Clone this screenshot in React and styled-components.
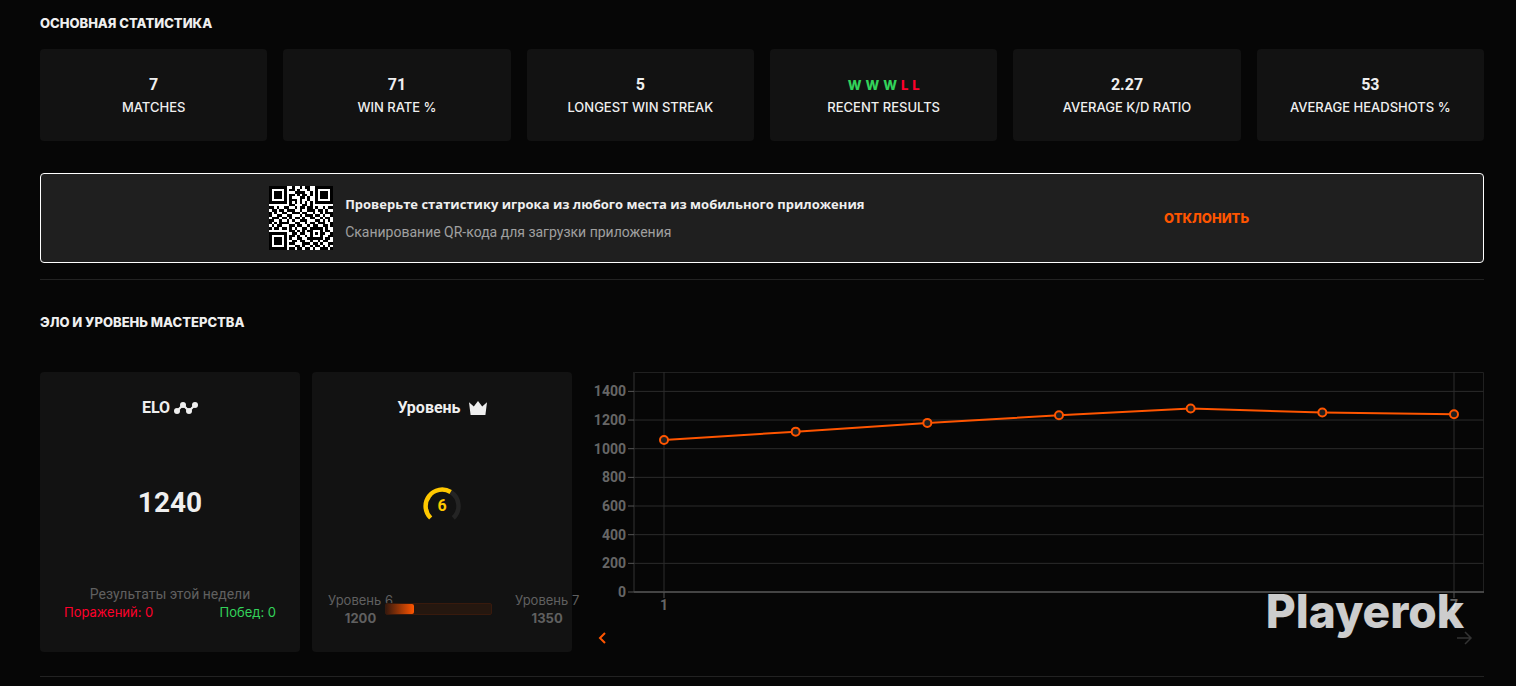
import React, { useState, useRef, useLayoutEffect } from 'react';
import styled, { createGlobalStyle } from 'styled-components';

const GlobalStyle = createGlobalStyle`
  * {
    box-sizing: border-box;
  }

  body {
    margin: 0;
    background: #060606;
    color: #efefef;
    font-family: Inter, Roboto, sans-serif;
    font-size: 13px;
    line-height: 20px;
  }
`;

const Page = styled.main`
  padding: 13px 32px 8px 40px;
`;

const SectionTitle = styled.h2`
  margin: 0 0 ${({ $gap }) => $gap}px;
  font-size: 13px;
  line-height: 20px;
  font-weight: 800;
  text-transform: uppercase;
`;

const Divider = styled.hr`
  height: 1px;
  margin: ${({ $top }) => $top}px 0 32px;
  border: none;
  background: #222;
`;

const StatGrid = styled.section`
  display: grid;
  grid-template-columns: repeat(6, 1fr);
  gap: 16px;
  margin-bottom: 32px;
`;

const StatCard = styled.div`
  padding: 25px 8px 23px;
  border-radius: 4px;
  background: #121212;
  text-align: center;
  line-height: 22px;
`;

const StatValue = styled.div`
  font-family: Roboto, sans-serif;
  font-size: 16px;
  font-weight: 700;
`;

const StatLabel = styled.div`
  font-weight: 500;
  text-transform: uppercase;
`;

const Results = styled.div`
  display: flex;
  justify-content: center;
  gap: 4px;
  font-weight: 800;
`;

const Result = styled.span`
  color: ${({ $win }) => ($win ? '#32d35a' : '#ff002b')};
`;

const Banner = styled.section`
  display: flex;
  justify-content: space-between;
  align-items: center;
  padding: 12px 16.2% 12px 15.8%;
  border: 1px solid #fff;
  border-radius: 4px;
  background: #1f1f1f;
`;

const BannerInfo = styled.div`
  display: flex;
  align-items: center;
  gap: 12px;
`;

const BannerTitle = styled.div`
  margin-bottom: 8px;
  font-family: 'Open Sans', sans-serif;
  font-weight: 700;
`;

const BannerText = styled.div`
  color: #a0a0a0;
  font-family: Roboto, sans-serif;
  font-size: 14px;
`;

const DismissButton = styled.button`
  padding: 0;
  border: none;
  background: none;
  color: #ff5500;
  font: inherit;
  font-weight: 800;
  text-transform: uppercase;
  cursor: pointer;
`;

const EloRow = styled.section`
  position: relative;
  display: flex;
  gap: 12px;
`;

const Panel = styled.div`
  display: flex;
  flex: 0 0 260px;
  flex-direction: column;
  justify-content: space-between;
  height: 280px;
  padding: 24px ${({ $side }) => $side}px 25px;
  border-radius: 4px;
  background: #121212;
`;

const PanelTitle = styled.h3`
  display: flex;
  justify-content: center;
  align-items: center;
  gap: ${({ $gap }) => $gap}px;
  margin: 0;
  font-family: Roboto, sans-serif;
  font-size: 16px;
  line-height: 24px;
  font-weight: 700;
`;

const EloValue = styled.div`
  font-family: Roboto, sans-serif;
  font-size: 28px;
  line-height: 36px;
  font-weight: 700;
  text-align: center;
`;

const WeekLabel = styled.div`
  color: #606060;
  font-family: Roboto, sans-serif;
  font-size: 14px;
  line-height: 18px;
  text-align: center;
`;

const WeekRow = styled.div`
  display: flex;
  justify-content: space-between;
  padding-bottom: 6px;
  line-height: 18px;
`;

const LevelGauge = styled.svg`
  align-self: center;
  font-family: Roboto, sans-serif;
  font-size: 16px;
  font-weight: 700;
`;

const LevelRow = styled.div`
  display: grid;
  grid-template-columns: minmax(0, 1fr) minmax(0, 2fr) minmax(0, 1fr);
  align-items: center;
`;

const LevelLabel = styled.div`
  width: max-content;
  padding-left: ${({ $end }) => ($end ? 16 : 0)}px;
  color: #606060;
  line-height: 18px;
  text-align: center;
  white-space: nowrap;
`;

const LevelTrack = styled.div`
  height: 12px;
  margin-right: 7px;
  border: 1px solid #381a0d;
  border-radius: 2px;
  background: #25170f;
`;

const LevelFill = styled.div`
  height: 10px;
  border-radius: 0 2px 2px 0;
  background: linear-gradient(90deg, #38190d, #ff5500);
`;

const ChartColumn = styled.div`
  flex: 1;
  min-width: 0;
`;

const ChartSvg = styled.svg`
  display: block;
  width: 100%;
  height: 254px;
  font-family: Roboto, sans-serif;
  font-size: 14px;
  font-weight: 700;
  fill: #666;
`;

const ChartNav = styled.div`
  display: flex;
  justify-content: space-between;
  padding: 0 10px;
`;

const NavButton = styled.button`
  display: flex;
  padding: 2px 0;
  border: none;
  background: none;
  color: ${({ disabled }) => (disabled ? '#333' : '#ff5500')};
  cursor: pointer;
`;

const Watermark = styled.div`
  position: absolute;
  right: 20px;
  bottom: 13px;
  color: #fff;
  opacity: 0.8;
  font-size: 46px;
  line-height: 56px;
  font-weight: 800;
  pointer-events: none;
`;

const stats = [
  { label: 'Matches', value: '7' },
  { label: 'Win Rate %', value: '71' },
  { label: 'Longest Win Streak', value: '5' },
  { label: 'Recent Results', results: ['W', 'W', 'W', 'L', 'L'] },
  { label: 'Average K/D Ratio', value: '2.27' },
  { label: 'Average Headshots %', value: '53' },
];

const eloHistory = [1061, 1119, 1180, 1233, 1280, 1252, 1240];
const eloTicks = [0, 200, 400, 600, 800, 1000, 1200, 1400];

const qrRows = [
  '1111111001001011001111111',
  '1000001011010001001000001',
  '1011101000111100101011101',
  '1011101011010110101011101',
  '1011101010001101001011101',
  '1000001011101001001000001',
  '1111111010101010101111111',
  '0000000011000110100000000',
  '1101001100101101101001011',
  '0110110111001001110110100',
  '1010011001110110010010111',
  '1001100110001011101101001',
  '0111011010110100110010110',
  '1100100101001110001101010',
  '1010111100110010110111001',
  '0101100011011001011001101',
  '1011011010100110111110100',
  '0000000011010101100010110',
  '1111111001101100101011001',
  '1000001011010010100010011',
  '1011101010011001111110110',
  '1011101001101100100101100',
  '1011101011000111011010011',
  '1000001000110100101101010',
  '1111111011011011010011101',
];

const QrCode = () => (
  <svg width="64" height="64" viewBox="0 0 25 25" shapeRendering="crispEdges" role="img" aria-label="QR">
    <rect width="25" height="25" fill="#fff" />
    {qrRows.map((row, y) =>
      row.split('').map((cell, x) => cell === '1' && <rect key={`${x}-${y}`} x={x} y={y} width="1" height="1" fill="#000" />)
    )}
  </svg>
);

const EloIcon = () => (
  <svg width="24" height="14" viewBox="0 0 24 14" fill="#efefef">
    <path d="M3 10 9 4l6 6 6-6" fill="none" stroke="#efefef" strokeWidth="2" />
    <circle cx="3" cy="10" r="3" />
    <circle cx="9" cy="4" r="3" />
    <circle cx="15" cy="10" r="3" />
    <circle cx="21" cy="4" r="3" />
  </svg>
);

const CrownIcon = () => (
  <svg width="18" height="14" viewBox="0 0 18 14" fill="#efefef">
    <path d="M0 1.2 4.8 5.6 9 0l4.2 5.6L18 1.2 16.4 14H1.6Z" />
  </svg>
);

const EloChart = () => {
  const ref = useRef(null);
  const [width, setWidth] = useState(900);

  useLayoutEffect(() => {
    const observer = new ResizeObserver(([entry]) => setWidth(entry.contentRect.width));
    observer.observe(ref.current);
    return () => observer.disconnect();
  }, []);

  const left = 50;
  const right = width - 0.5;
  const bottom = 220;
  const toX = (index) => left + 30 + (index * (width - left - 60)) / (eloHistory.length - 1);
  const toY = (elo) => bottom - elo * 0.1433;
  const points = eloHistory.map((elo, index) => [toX(index), toY(elo)]);

  return (
    <ChartSvg ref={ref}>
      <g stroke="#2c2c2c">
        <path d={`M${left} .5H${right}V${bottom}`} fill="none" stroke="#202020" />
        <path d={`M${left} 0V${bottom}`} stroke="#1c1c1c" strokeWidth="2" />
        {eloTicks.slice(1).map((tick) => (
          <line key={tick} x1={left} x2={right} y1={toY(tick)} y2={toY(tick)} />
        ))}
        <line x1={toX(0)} x2={toX(0)} y1="0" y2={bottom} />
        <line x1={toX(6)} x2={toX(6)} y1="0" y2={bottom} />
      </g>
      <g stroke="#555">
        <line x1={left} x2={width} y1={bottom} y2={bottom} strokeWidth="2" stroke="#444" />
        {eloTicks.map((tick) => (
          <line key={tick} x1={left - 6} x2={left} y1={toY(tick)} y2={toY(tick)} />
        ))}
        <line x1={toX(0)} x2={toX(0)} y1={bottom} y2={bottom + 6} />
        <line x1={toX(6)} x2={toX(6)} y1={bottom} y2={bottom + 6} />
      </g>
      {eloTicks.map((tick) => (
        <text key={tick} x={left - 8} y={toY(tick) + 5} textAnchor="end">
          {tick}
        </text>
      ))}
      <text x={toX(0)} y="238" textAnchor="middle">1</text>
      <text x={toX(6)} y="238" textAnchor="middle">7</text>
      <polyline points={points.join(' ')} fill="none" stroke="#ff5500" strokeWidth="2" />
      {points.map(([x, y]) => (
        <circle key={x} cx={x} cy={y} r="4" fill="#1f1f1f" stroke="#ff5500" strokeWidth="2" />
      ))}
    </ChartSvg>
  );
};

const App = () => {
  const [showBanner, setShowBanner] = useState(true);

  return (
    <Page>
      <GlobalStyle />
      <SectionTitle $gap={16}>Основная статистика</SectionTitle>
      <StatGrid>
        {stats.map(({ label, value, results }) => (
          <StatCard key={label}>
            {results ? (
              <Results>
                {results.map((result, index) => (
                  <Result key={index} $win={result === 'W'}>{result}</Result>
                ))}
              </Results>
            ) : (
              <StatValue>{value}</StatValue>
            )}
            <StatLabel>{label}</StatLabel>
          </StatCard>
        ))}
      </StatGrid>

      {showBanner && (
        <Banner>
          <BannerInfo>
            <QrCode />
            <div>
              <BannerTitle>Проверьте статистику игрока из любого места из мобильного приложения</BannerTitle>
              <BannerText>Сканирование QR-кода для загрузки приложения</BannerText>
            </div>
          </BannerInfo>
          <DismissButton onClick={() => setShowBanner(false)}>Отклонить</DismissButton>
        </Banner>
      )}
      <Divider $top={16} />

      <SectionTitle $gap={40}>Эло и уровень мастерства</SectionTitle>
      <EloRow>
        <Panel $side={24}>
          <PanelTitle $gap={4}>ELO <EloIcon /></PanelTitle>
          <EloValue>1240</EloValue>
          <div>
            <WeekLabel>Результаты этой недели</WeekLabel>
            <WeekRow>
              <Result>Поражений: 0</Result>
              <Result $win>Побед: 0</Result>
            </WeekRow>
          </div>
        </Panel>

        <Panel $side={16}>
          <PanelTitle $gap={8}>Уровень <CrownIcon /></PanelTitle>
          <LevelGauge width="40" height="40" viewBox="0 0 40 40" fill="none" strokeWidth="4.5">
            <path d="M28.7 6A16.5 16.5 0 0 1 31.3 32" stroke="#242424" />
            <path d="M8.7 32A16.5 16.5 0 0 1 28.7 6" stroke="#ffc800" />
            <text x="20" y="25" textAnchor="middle" fill="#ffc800">6</text>
          </LevelGauge>
          <LevelRow>
            <LevelLabel>Уровень 6<br /><b>1200</b></LevelLabel>
            <LevelTrack>
              <LevelFill style={{ width: `${((1240 - 1200) / 150) * 100}%` }} />
            </LevelTrack>
            <LevelLabel $end>Уровень 7<br /><b>1350</b></LevelLabel>
          </LevelRow>
        </Panel>

        <ChartColumn>
          <EloChart />
          <ChartNav>
            <NavButton aria-label="Назад">
              <svg width="16" height="20" viewBox="0 0 16 20" fill="none" stroke="currentColor" strokeWidth="2">
                <path d="m11 5-5 5 5 5" />
              </svg>
            </NavButton>
            <NavButton aria-label="Вперёд" disabled>
              <svg width="18" height="20" viewBox="0 0 18 20" fill="none" stroke="currentColor" strokeWidth="1.5">
                <path d="M1 10h14M9 4l6 6-6 6" />
              </svg>
            </NavButton>
          </ChartNav>
        </ChartColumn>
        <Watermark>Playerok</Watermark>
      </EloRow>
      <Divider $top={24} />
    </Page>
  );
};

export default App;
